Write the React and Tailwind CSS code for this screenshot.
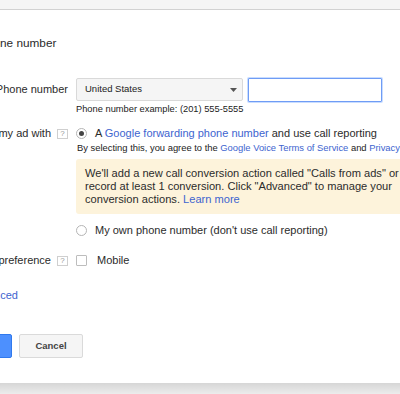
import React from "react";

function Help() {
  return (
    <span className="inline-flex items-center justify-center w-[11px] h-[10px] shrink-0 border border-[#cfcfcf] text-[#999] text-[8px] leading-none bg-white">
      ?
    </span>
  );
}

function Radio({ checked }) {
  return (
    <span className="inline-flex items-center justify-center w-[11px] h-[11px] rounded-full border border-[#b5b5b5] bg-white shrink-0">
      {checked && <span className="w-[5px] h-[5px] rounded-full bg-[#444]" />}
    </span>
  );
}

export default function App() {
  return (
    <div className="w-[400px] h-[394px] overflow-hidden bg-white relative font-['Liberation_Sans',Arial,sans-serif] text-[#2b2b2b]">
      <div className="h-[10px] bg-[#f5f5f5] border-b border-[#d2d2d2]" />
      <div className="h-[373px] ml-[-31px] w-[480px] flex flex-col">
        <div className="mt-[26px] ml-[10px] text-[11.8px] leading-[14px] whitespace-nowrap">
          Phone number
        </div>

        {/* Row 1 */}
        <div className="mt-[28px] flex items-start">
          <div className="w-[99px] shrink-0 pt-[5px] text-right text-[11px] leading-[13px] whitespace-nowrap">
            Phone number
          </div>
          <div className="ml-[8px] flex flex-col">
            <div className="flex items-start">
              <div className="w-[167px] h-[23px] border border-[#d9d9d9] bg-[#f5f5f5] rounded-[2px] flex items-center justify-between pl-[8px] pr-[5px]">
                <span className="text-[9.5px] text-[#222]">United States</span>
                <svg width="7" height="4" viewBox="0 0 7 4">
                  <path d="M0 0 L7 0 L3.5 4 Z" fill="#555" />
                </svg>
              </div>
              <div className="ml-[5px] w-[134px] h-[24px] border border-[#6f9cf5] shadow-[0_0_0_1px_rgba(77,144,254,0.3)] rounded-[1px] bg-white" />
            </div>
            <div className="mt-[2px] text-[9.3px] leading-[11px] text-[#222] whitespace-nowrap">
              Phone number example: (201) 555-5555
            </div>
          </div>
        </div>

        {/* Row 2 */}
        <div className="mt-[12px] flex items-start">
          <div className="w-[99px] shrink-0 flex items-center justify-end gap-[6px] text-[11px] leading-[13px] whitespace-nowrap">
            <span>Show in my ad with</span>
            <Help />
          </div>
          <div className="ml-[8px] flex flex-col">
            <div className="flex items-center h-[13px] text-[11px] leading-[13px] whitespace-nowrap">
              <Radio checked />
              <span className="ml-[8px]">
                A <span className="text-[#3d64cf]">Google forwarding phone number</span> and use call reporting
              </span>
            </div>
            <div className="mt-[2px] ml-[1px] text-[9.4px] leading-[11px] text-[#222] whitespace-nowrap">
              By selecting this, you agree to the <span className="text-[#3d64cf]">Google Voice Terms of Service</span> and <span className="text-[#3d64cf]">Privacy Policy</span>
            </div>
            <div className="mt-[6px] h-[55px] w-[360px] bg-[#fdf3db] rounded-[3px] pl-[9px] py-[8px] text-[11.1px] leading-[13px] whitespace-nowrap">
              We'll add a new call conversion action called "Calls from ads" or
              <br />
              record at least 1 conversion. Click "Advanced" to manage your
              <br />
              conversion actions. <span className="text-[#3d64cf]">Learn more</span>
            </div>
            <div className="mt-[10px] flex items-center h-[13px] text-[11px] leading-[13px] whitespace-nowrap">
              <Radio />
              <span className="ml-[8px]">My own phone number (don't use call reporting)</span>
            </div>
          </div>
        </div>

        {/* Row 3 */}
        <div className="mt-[17px] flex items-start">
          <div className="w-[99px] shrink-0 flex items-center justify-end gap-[6px] text-[11px] leading-[13px] whitespace-nowrap">
            <span>Device preference</span>
            <Help />
          </div>
          <div className="ml-[8px] flex items-center h-[13px] text-[11px] leading-[13px]">
            <span className="w-[11px] h-[11px] border border-[#bdbdbd] rounded-[1px] bg-white shrink-0" />
            <span className="ml-[10px]">Mobile</span>
          </div>
        </div>

        <div className="mt-[22px] text-[11px] leading-[13px] text-[#3d64cf] whitespace-nowrap">Advanced</div>

        <div className="mt-[32px] flex items-start">
          <div className="w-[43px] h-[24px] bg-[#4d90fe] border border-[#3079ed] rounded-[2px]" />
          <div className="ml-[7px] w-[64px] h-[24px] bg-[#f5f5f5] border border-[#dadada] rounded-[2px] flex items-center justify-center text-[9.5px] font-bold text-[#444]">
            Cancel
          </div>
        </div>
      </div>
      <div className="h-[11px] bg-gradient-to-b from-[#d6d6d6] to-[#ececec]" />
    </div>
  );
}
